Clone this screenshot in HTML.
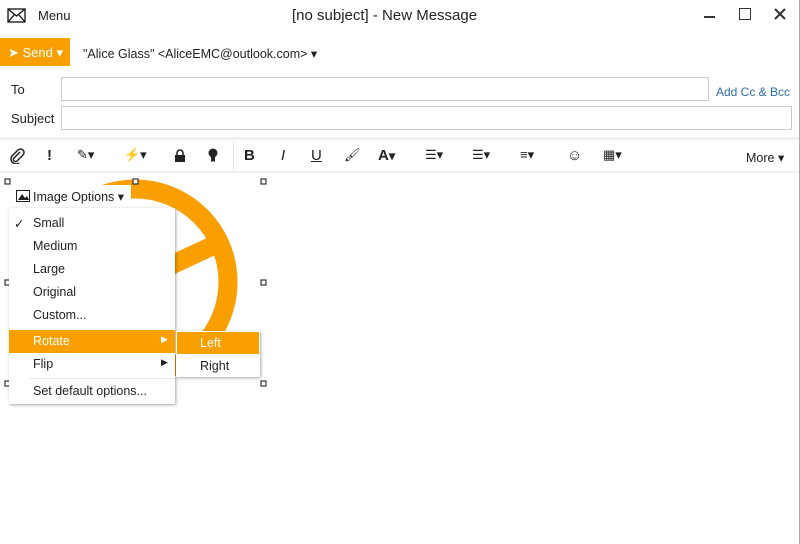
<!DOCTYPE html>
<html><head><style>
body{margin:0;width:800px;height:544px;background:#fff;font-family:"Liberation Sans",sans-serif;color:#222;position:relative;overflow:hidden;font-size:13px}
.a{position:absolute}
.tb span{position:absolute;top:147px;font-size:15px}
.tb svg{position:absolute}
.menu div{position:absolute;left:25px;font-size:12.5px}
</style></head><body>
<div class="a" style="right:0;top:0;width:1px;height:544px;background:#aaa"></div>
<svg class="a" style="left:7px;top:8px" width="20" height="16"><rect x="1" y="1" width="17" height="13" fill="none" stroke="#111" stroke-width="1.3"/><path d="M1 1L9.5 8L18 1M1 14L7 7M18 14L12 7" fill="none" stroke="#111" stroke-width="1.3"/></svg>
<div class="a" style="left:38px;top:8px;font-size:13px">Menu</div>
<div class="a" style="left:292px;top:7px;font-size:15px">[no subject] - New Message</div>
<div class="a" style="left:704px;top:16px;width:11px;height:1.5px;background:#333"></div>
<div class="a" style="left:739px;top:8px;width:10px;height:10px;border:1.5px solid #333"></div>
<svg class="a" style="left:774px;top:8px" width="12" height="12"><path d="M1 1L11 11M11 1L1 11" stroke="#333" stroke-width="2"/></svg>
<div class="a" style="left:0;top:38px;width:70px;height:28px;background:#f9a000"></div>
<div class="a" style="left:8px;top:45px;color:#fff;font-size:13px">➤ Send ▾</div>
<div class="a" style="left:83px;top:46px;font-size:12.5px">"Alice Glass" &lt;AliceEMC@outlook.com&gt; ▾</div>
<div class="a" style="left:11px;top:82px">To</div>
<div class="a" style="left:61px;top:77px;width:646px;height:22px;border:1px solid #ccc"></div>
<div class="a" style="left:716px;top:85px;color:#2b6cb0;font-size:12px">Add Cc &amp; Bcc</div>
<div class="a" style="left:11px;top:111px">Subject</div>
<div class="a" style="left:61px;top:106px;width:729px;height:22px;border:1px solid #ccc"></div>
<div class="a" style="left:0;top:137px;width:799px;height:3px;background:#f0f0f0"></div>
<div class="a" style="left:0;top:171px;width:799px;height:2px;background:#f0f0f0"></div>
<div class="a" style="left:233px;top:142px;width:1px;height:28px;background:#e6e6e6"></div>
<div class="tb">
<svg style="left:9px;top:148px" width="16" height="16"><path d="M11 4L5 10a2 2 0 0 0 3 3l6-6a3.5 3.5 0 0 0-5-5L3 8a5 5 0 0 0 7 7" fill="none" stroke="#222" stroke-width="1.5"/></svg>
<span style="left:47px;font-weight:bold">!</span><span style="left:77px;font-size:13px">✎▾</span><span style="left:124px;font-size:13px">⚡▾</span>
<svg style="left:174px;top:149px" width="12" height="14"><path d="M3 6V4a3 3 0 0 1 6 0v2" fill="none" stroke="#222" stroke-width="1.6"/><rect x="1" y="6" width="10" height="7" fill="#222"/></svg>
<svg style="left:207px;top:148px" width="12" height="16"><circle cx="6" cy="5" r="4.5" fill="#222"/><path d="M4 9h4v5l-2-1-2 1z" fill="#222"/></svg>
<span style="left:244px;font-weight:bold">B</span><span style="left:281px;font-style:italic">I</span><span style="left:311px;text-decoration:underline">U</span><span style="left:344px;font-size:13px">🖌</span><span style="left:378px;font-weight:bold">A<small>▾</small></span>
<span style="left:425px;font-size:13px">☰▾</span><span style="left:472px;font-size:13px">☰▾</span><span style="left:520px;font-size:13px">≡▾</span><span style="left:567px">☺</span><span style="left:603px;font-size:13px">▦▾</span>
<span style="left:746px;font-size:12.5px;top:150px">More ▾</span>
</div>
<svg class="a" style="left:0;top:175px" width="280" height="220">
<circle cx="135" cy="107" r="93" fill="none" stroke="#f9a000" stroke-width="19"/>
<path d="M135 107L225 65" stroke="#f9a000" stroke-width="19"/>
<g fill="#fff" stroke="#333" stroke-width="1.2"><rect x="5" y="4" width="5" height="5"/><rect x="133" y="4" width="5" height="5"/><rect x="261" y="4" width="5" height="5"/><rect x="5" y="105" width="5" height="5"/><rect x="261" y="105" width="5" height="5"/><rect x="5" y="206" width="5" height="5"/><rect x="261" y="206" width="5" height="5"/></g>
</svg>
<div class="a" style="left:9px;top:185px;width:122px;height:24px;background:#fff"></div>
<div class="a" style="left:9px;top:208px;width:166px;height:196px;background:#fff;box-shadow:1px 1px 3px rgba(0,0,0,.35)"></div>
<svg class="a" style="left:16px;top:190px" width="14" height="12"><rect x="0.5" y="0.5" width="13" height="11" fill="none" stroke="#222"/><path d="M2 10L6 4l3 4 2-2 2 4z" fill="#222"/></svg>
<div class="a" style="left:33px;top:189px;font-size:12.5px">Image Options ▾</div>
<div class="menu">
<div style="left:14px;top:216px">✓</div>
<div style="left:33px;top:216px">Small</div>
<div style="left:33px;top:239px">Medium</div>
<div style="left:33px;top:262px">Large</div>
<div style="left:33px;top:285px">Original</div>
<div style="left:33px;top:308px">Custom...</div>
</div>
<div class="a" style="left:9px;top:330px;width:166px;height:23px;background:#f9a000"></div>
<div class="a" style="left:33px;top:334px;color:#fff;font-size:12.5px">Rotate</div>
<div class="a" style="left:161px;top:334px;color:#fff;font-size:9px">▶</div>
<div class="a" style="left:33px;top:357px;font-size:12.5px">Flip</div>
<div class="a" style="left:161px;top:357px;font-size:9px">▶</div>
<div class="a" style="left:30px;top:378px;width:145px;height:1px;background:#e6e6e6"></div>
<div class="a" style="left:33px;top:384px;font-size:12.5px">Set default options...</div>
<div class="a" style="left:176px;top:331px;width:84px;height:46px;background:#fff;box-shadow:1px 1px 3px rgba(0,0,0,.35)"></div>
<div class="a" style="left:177px;top:332px;width:82px;height:22px;background:#f9a000"></div>
<div class="a" style="left:200px;top:336px;color:#fff;font-size:12.5px">Left</div>
<div class="a" style="left:200px;top:359px;font-size:12.5px">Right</div>
</body></html>
